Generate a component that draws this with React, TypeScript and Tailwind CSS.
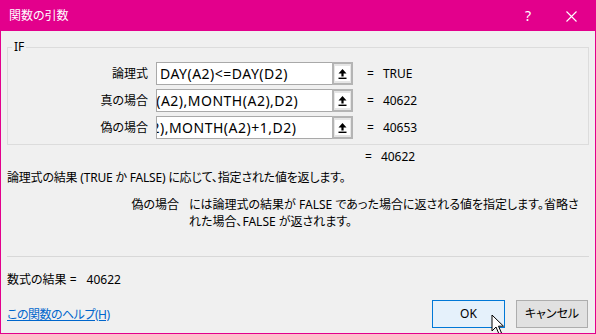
const rows = [
  { label: "論理式", text: "DAY(A2)<=DAY(D2)", shift: 0, value: "TRUE" },
  { label: "真の場合", text: "R(A2),MONTH(A2),D2)", shift: -13, value: "40622" },
  { label: "偽の場合", text: "A2),MONTH(A2)+1,D2)", shift: -18, value: "40653" },
];

function RefButton() {
  return (
    <div className="flex h-[23px] w-[21px] items-center justify-center border-2 border-[#b4b4b4] bg-[#e6e6e6]">
      <div className="flex h-[15px] w-[15px] items-center justify-center bg-white">
        <svg width="9" height="10" viewBox="0 0 9 10">
          <path d="M4.5 0 L8.5 4.5 L5.6 4.5 L5.6 7.5 L3.4 7.5 L3.4 4.5 L0.5 4.5 Z" fill="#000" />
          <rect x="0.5" y="8.6" width="8" height="1.4" fill="#000" />
        </svg>
      </div>
    </div>
  );
}

export default function App() {
  return (
    <div className="relative h-[334px] w-[596px] overflow-hidden border border-[#e3008c] bg-[#f0f0f0] font-['Noto_Sans','Noto_Sans_CJK_JP',sans-serif] text-[12px] leading-[14px] text-black [font-feature-settings:'palt']">
      {/* title bar */}
      <div className="flex h-[30px] items-center bg-[#e3008c] text-white">
        <span className="ml-[8px] text-[12px]">関数の引数</span>
        <span className="ml-auto mr-[35px] text-[14px]">?</span>
        <svg className="mr-[18px]" width="11" height="11" viewBox="0 0 11 11">
          <path d="M0.5 0.5 L10.5 10.5 M10.5 0.5 L0.5 10.5" stroke="#fff" strokeWidth="1.1" />
        </svg>
      </div>

      <div className="px-[6px]">
        {/* group box */}
        <div className="relative mt-[16px] h-[98px] border border-[#dcdcdc] pt-[14px]">
          <span className="absolute -top-[8px] left-[4px] bg-[#f0f0f0] px-[2px]">IF</span>
          <div className="flex flex-col gap-[4px]">
            {rows.map((r) => (
              <div key={r.label} className="flex h-[23px] items-center">
                <span className="w-[140px] text-right">{r.label}</span>
                <div className="ml-[8px] h-[23px] w-[176px] border border-r-0 border-[#a9a9a9] bg-white">
                  <div
                    className="overflow-hidden whitespace-nowrap pl-[3px] text-[14px] leading-[21px] tracking-[0.5px]"
                    style={{ textIndent: r.shift }}
                  >
                    {r.text}
                  </div>
                </div>
                <RefButton />
                <span className="ml-[14px]">=</span>
                <span className="ml-[9px]">{r.value}</span>
              </div>
            ))}
          </div>
        </div>

        <div className="mt-[5px] flex h-[14px] items-center pl-[358px]">
          <span>=</span>
          <span className="ml-[9px]">40622</span>
        </div>

        <p className="mt-[7px] h-[14px] whitespace-nowrap tracking-[-0.2px]">
          論理式の結果 (TRUE か FALSE) に応じて、指定された値を返します。
        </p>

        <div className="mt-[11px] flex h-[34px] leading-[17px]">
          <span className="w-[172px] text-right">偽の場合</span>
          <p className="ml-[10px] whitespace-nowrap">
            には論理式の結果が FALSE であった場合に返される値を指定します。省略さ
            <br />
            れた場合、FALSE が返されます。
          </p>
        </div>

        <div className="mt-[26px] h-px bg-[#d8d8d8]" />

        <div className="mt-[16px] flex h-[14px] items-center">
          <span>数式の結果 =</span>
          <span className="ml-[10px]">40622</span>
        </div>

        <div className="mt-[13px] flex h-[28px] items-center">
          <a className="mt-[1px] tracking-[-0.5px] text-[#0066cc] underline" href="#">
            この関数のヘルプ(H)
          </a>
          <button className="ml-auto h-[28px] w-[73px] border border-[#0078d7] bg-[#e5f1fb]">
            OK
          </button>
          <button className="ml-[11px] mr-[1px] h-[28px] w-[72px] border border-[#adadad] bg-[#e1e1e1]">
            キャンセル
          </button>
        </div>
      </div>

      {/* mouse pointer */}
      <svg className="absolute left-[490px] top-[313px]" width="14" height="22" viewBox="0 0 14 22">
        <path
          d="M1 1 L1 17 L5 13 L8 20 L10.5 19 L7.5 12.2 L12.5 12.2 Z"
          fill="#fff"
          stroke="#000"
          strokeWidth="1"
          strokeLinejoin="round"
        />
      </svg>
    </div>
  );
}
